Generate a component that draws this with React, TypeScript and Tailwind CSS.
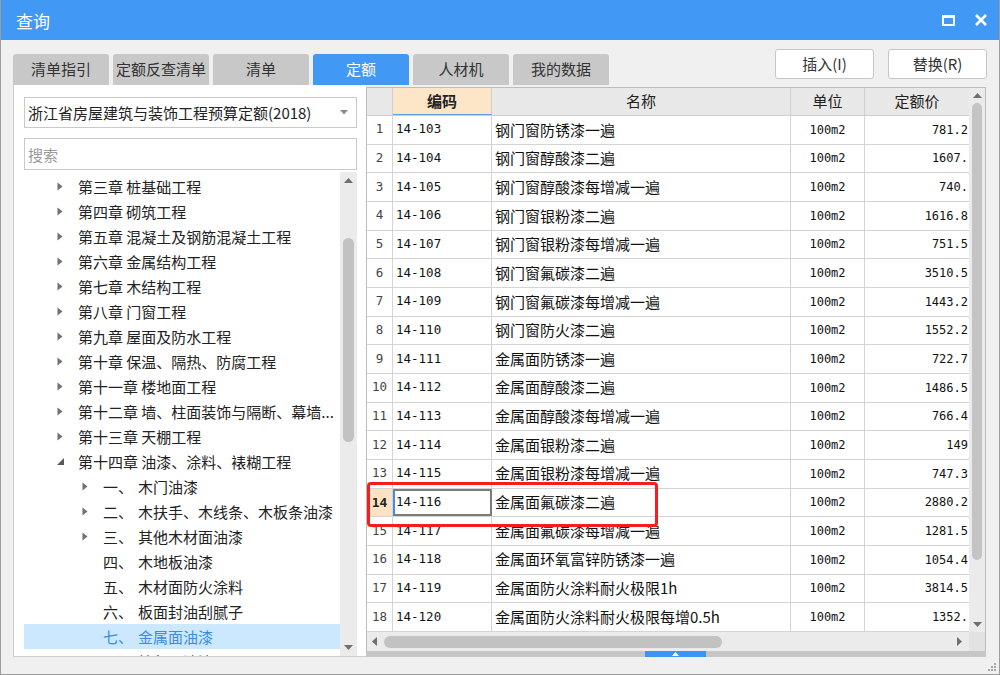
import React from "react";

const rows: [string, string, string][] = [
  ["14-103", "钢门窗防锈漆一遍", "781.2"],
  ["14-104", "钢门窗醇酸漆二遍", "1607."],
  ["14-105", "钢门窗醇酸漆每增减一遍", "740."],
  ["14-106", "钢门窗银粉漆二遍", "1616.8"],
  ["14-107", "钢门窗银粉漆每增减一遍", "751.5"],
  ["14-108", "钢门窗氟碳漆二遍", "3510.5"],
  ["14-109", "钢门窗氟碳漆每增减一遍", "1443.2"],
  ["14-110", "钢门窗防火漆二遍", "1552.2"],
  ["14-111", "金属面防锈漆一遍", "722.7"],
  ["14-112", "金属面醇酸漆二遍", "1486.5"],
  ["14-113", "金属面醇酸漆每增减一遍", "766.4"],
  ["14-114", "金属面银粉漆二遍", "149"],
  ["14-115", "金属面银粉漆每增减一遍", "747.3"],
  ["14-116", "金属面氟碳漆二遍", "2880.2"],
  ["14-117", "金属面氟碳漆每增减一遍", "1281.5"],
  ["14-118", "金属面环氧富锌防锈漆一遍", "1054.4"],
  ["14-119", "金属面防火涂料耐火极限1h", "3814.5"],
  ["14-120", "金属面防火涂料耐火极限每增0.5h", "1352."],
];

const chapters = [
  "第三章 桩基础工程",
  "第四章 砌筑工程",
  "第五章 混凝土及钢筋混凝土工程",
  "第六章 金属结构工程",
  "第七章 木结构工程",
  "第八章 门窗工程",
  "第九章 屋面及防水工程",
  "第十章 保温、隔热、防腐工程",
  "第十一章 楼地面工程",
  "第十二章 墙、柱面装饰与隔断、幕墙...",
  "第十三章 天棚工程",
];

const children: [string, string, boolean, boolean][] = [
  ["一、", "木门油漆", true, false],
  ["二、", "木扶手、木线条、木板条油漆", true, false],
  ["三、", "其他木材面油漆", true, false],
  ["四、", "木地板油漆", false, false],
  ["五、", "木材面防火涂料", false, false],
  ["六、", "板面封油刮腻子", false, false],
  ["七、", "金属面油漆", false, true],
  ["八、", "抹灰面油漆", false, false],
];

const tabs = ["清单指引", "定额反查清单", "清单", "定额", "人材机", "我的数据"];

function RightTri() {
  return (
    <svg width="6" height="9" viewBox="0 0 6 9">
      <path d="M0.5 0.5 L5.5 4.5 L0.5 8.5 Z" fill="#707070" />
    </svg>
  );
}

function Arrow({ dir }: { dir: "up" | "down" | "left" | "right" }) {
  const d =
    dir === "up"
      ? "M0 5 L4.5 0 L9 5 Z"
      : dir === "down"
      ? "M0 0 L9 0 L4.5 5 Z"
      : dir === "left"
      ? "M5 0 L5 9 L0 4.5 Z"
      : "M0 0 L0 9 L5 4.5 Z";
  const w = dir === "up" || dir === "down" ? 9 : 5;
  const h = dir === "up" || dir === "down" ? 5 : 9;
  return (
    <svg width={w} height={h} viewBox={`0 0 ${w} ${h}`}>
      <path d={d} fill="#6f6f6f" />
    </svg>
  );
}

export default function App() {
  return (
    <div className="relative w-[1000px] h-[675px] bg-[#f0f0f0] border-x border-b border-[#9c9c9c] flex flex-col overflow-hidden font-['Noto_Sans_CJK_SC',sans-serif] text-[#222]">
      {/* Title bar */}
      <div className="h-[40px] shrink-0 bg-[#4299f5] flex items-center justify-between pl-[15px] pr-[12px]">
        <span className="text-white text-[17px] leading-none">查询</span>
        <div className="flex items-center gap-[20px]">
          <svg width="13" height="11" viewBox="0 0 13 11">
            <rect x="1" y="1.5" width="11" height="8.5" fill="none" stroke="white" strokeWidth="2" />
            <rect x="0" y="0" width="13" height="3" fill="white" />
          </svg>
          <svg width="12" height="12" viewBox="0 0 12 12">
            <path d="M1 1 L11 11 M11 1 L1 11" stroke="white" strokeWidth="2.6" />
          </svg>
        </div>
      </div>

      {/* Tabs + buttons */}
      <div className="h-[45px] shrink-0 flex pl-[12px] pr-[12px]">
        <div className="flex items-end gap-[4px]">
          {tabs.map((t) => (
            <div
              key={t}
              className={
                t === "定额"
                  ? "w-[96px] h-[31px] rounded-t-[3px] bg-[#4299f5] text-white text-[15px] flex items-center justify-center"
                  : "w-[96px] h-[31px] rounded-t-[3px] bg-[#c8c8c8] text-[#333] text-[15px] flex items-center justify-center"
              }
            >
              {t}
            </div>
          ))}
        </div>
        <div className="ml-auto flex gap-[14px] pt-[9px]">
          <div className="w-[99px] h-[30px] bg-white border border-[#c6c6c6] rounded-[3px] flex items-center justify-center text-[15px] text-[#333]">
            插入(I)
          </div>
          <div className="w-[99px] h-[30px] bg-white border border-[#c6c6c6] rounded-[3px] flex items-center justify-center text-[15px] text-[#333]">
            替换(R)
          </div>
        </div>
      </div>

      {/* Main */}
      <div className="h-[572px] shrink-0 flex pl-[12px] pr-[13px]">
        {/* Left panel */}
        <div className="w-[353px] h-full bg-white border-l border-b border-[#cfcfcf] flex flex-col pl-[10px] pr-[9px]">
          <div className="mt-[12px] h-[31px] border border-[#c9c9c9] flex items-center pl-[3px] pr-[8px]">
            <span className="text-[15px] text-[#222] leading-none whitespace-nowrap">浙江省房屋建筑与装饰工程预算定额(2018)</span>
            <svg className="ml-auto" width="8" height="5" viewBox="0 0 8 5">
              <path d="M0 0 L8 0 L4 4.5 Z" fill="#8a8a8a" />
            </svg>
          </div>
          <div className="mt-[10px] h-[32px] border border-[#c9c9c9] flex items-center pl-[3px]">
            <span className="text-[15px] text-[#9a9a9a] leading-none">搜索</span>
          </div>
          <div className="mt-[2px] flex-1 flex min-h-0">
            <div className="w-[316px] overflow-hidden pt-[2px]">
              {chapters.map((c) => (
                <div key={c} className="h-[25px] flex items-center">
                  <div className="w-[33px] shrink-0" />
                  <div className="w-[21px] shrink-0 flex items-center">
                    <RightTri />
                  </div>
                  <span className="text-[15px] leading-none whitespace-nowrap text-[#222]">{c}</span>
                </div>
              ))}
              <div className="h-[25px] flex items-center">
                <div className="w-[33px] shrink-0" />
                <div className="w-[21px] shrink-0 flex items-center">
                  <svg width="7" height="7" viewBox="0 0 7 7">
                    <path d="M7 0 L7 7 L0 7 Z" fill="#5a5a5a" />
                  </svg>
                </div>
                <span className="text-[15px] leading-none whitespace-nowrap text-[#222]">第十四章 油漆、涂料、裱糊工程</span>
              </div>
              {children.map(([n, name, arrow, sel]) => (
                <div key={n} className={sel ? "h-[25px] flex items-center bg-[#cce8ff]" : "h-[25px] flex items-center"}>
                  <div className="w-[58px] shrink-0" />
                  <div className="w-[21px] shrink-0 flex items-center">{arrow ? <RightTri /> : null}</div>
                  <span className={sel ? "w-[35px] shrink-0 text-[15px] leading-none text-[#3a8ae6]" : "w-[35px] shrink-0 text-[15px] leading-none text-[#222]"}>{n}</span>
                  <span className={sel ? "text-[15px] leading-none whitespace-nowrap text-[#3a8ae6]" : "text-[15px] leading-none whitespace-nowrap text-[#222]"}>{name}</span>
                </div>
              ))}
            </div>
            <div className="w-[17px] bg-[#ebebeb] flex flex-col">
              <div className="h-[16px] flex items-center justify-center">
                <Arrow dir="up" />
              </div>
              <div className="mt-[50px] h-[204px] mx-[3px] rounded-full bg-[#c2c2c2]" />
              <div className="flex-1" />
              <div className="h-[18px] flex items-center justify-center">
                <Arrow dir="down" />
              </div>
            </div>
          </div>
        </div>

        {/* Right panel */}
        <div className="flex-1 flex flex-col pt-[2px]">
          <div className="flex-1 border-l border-t border-r border-[#bcbcbc] flex flex-col bg-white min-h-0">
            <div className="h-[544px] flex">
              <div className="w-[602px] overflow-hidden">
                {/* header */}
                <div className="h-[28px] flex border-b border-[#cfcfcf] bg-[#e8e8e8] text-[15px] text-[#222]">
                  <div className="w-[26px] shrink-0 border-r border-[#cfcfcf]" />
                  <div className="w-[99px] shrink-0 border-r border-[#cfcfcf] bg-[#fde6c8] border-b border-b-[#5a9de8] flex items-center justify-center font-bold">编码</div>
                  <div className="w-[299px] shrink-0 border-r border-[#cfcfcf] flex items-center justify-center">名称</div>
                  <div className="w-[74px] shrink-0 border-r border-[#cfcfcf] flex items-center justify-center">单位</div>
                  <div className="w-[104px] shrink-0 flex items-center justify-center">定额价</div>
                </div>
                {rows.map(([code, name, price], i) => {
                  const sel = i === 13;
                  return (
                    <div key={code} className="h-[28.67px] flex border-b border-[#d4d4d4] bg-white">
                      <div
                        className={
                          sel
                            ? "w-[26px] shrink-0 border-r border-[#d4d4d4] bg-[#fde3c3] flex items-center justify-center font-['DejaVu_Sans_Mono',monospace] text-[13px] font-bold text-[#222]"
                            : "w-[26px] shrink-0 border-r border-[#d4d4d4] flex items-center justify-center font-['DejaVu_Sans_Mono',monospace] text-[12.5px] text-[#444]"
                        }
                      >
                        {i + 1}
                      </div>
                      <div
                        className={
                          sel
                            ? "w-[99px] shrink-0 border-2 border-[#7b7b7b] border-l-[#3f8eec] flex items-center pl-[1px] font-['DejaVu_Sans_Mono',monospace] text-[12.5px] text-[#111]"
                            : "w-[99px] shrink-0 border-r border-[#d4d4d4] flex items-center pl-[3px] font-['DejaVu_Sans_Mono',monospace] text-[12.5px] text-[#111]"
                        }
                      >
                        {code}
                      </div>
                      <div className="w-[299px] shrink-0 border-r border-[#d4d4d4] flex items-center pl-[3px] text-[15px] text-[#111] whitespace-nowrap overflow-hidden">
                        {name}
                      </div>
                      <div className="w-[74px] shrink-0 border-r border-[#d4d4d4] flex items-center justify-center font-['DejaVu_Sans_Mono',monospace] text-[12px] text-[#111]">
                        100m2
                      </div>
                      <div className="w-[104px] shrink-0 flex items-center justify-end pr-[1px] font-['DejaVu_Sans_Mono',monospace] text-[12px] text-[#111]">
                        {price}
                      </div>
                    </div>
                  );
                })}
              </div>
              <div className="w-[16px] bg-[#ebebeb] flex flex-col">
                <div className="h-[15px] flex items-center justify-center">
                  <Arrow dir="up" />
                </div>
                <div className="h-[457px] mx-[3px] rounded-full bg-[#c4c4c4]" />
                <div className="flex-1" />
                <div className="h-[15px] flex items-center justify-center">
                  <Arrow dir="down" />
                </div>
              </div>
            </div>
            <div className="h-[19px] flex">
              <div className="w-[602px] bg-[#ebebeb] flex items-center">
                <div className="w-[15px] flex items-center justify-center">
                  <Arrow dir="left" />
                </div>
                <div className="ml-[2px] w-[338px] h-[12px] rounded-full bg-[#c2c2c2]" />
                <div className="flex-1" />
                <div className="w-[15px] mr-[2px] flex items-center justify-center">
                  <Arrow dir="right" />
                </div>
              </div>
              <div className="w-[16px] bg-[#e2e2e2]" />
            </div>
          </div>
          <div className="h-[6px] flex bg-[#c6c6c6]">
            <div className="w-[279px]" />
            <div className="w-[61px] bg-[#3d93f2] flex items-center justify-center">
              <svg width="7" height="4" viewBox="0 0 7 4">
                <path d="M0 4 L3.5 0 L7 4 Z" fill="white" />
              </svg>
            </div>
          </div>
        </div>
      </div>

      {/* Bottom */}
      <div className="flex-1 flex justify-end items-end pr-[3px] pb-[3px]">
        <svg width="9" height="9" viewBox="0 0 9 9">
          <rect x="7" y="1" width="2" height="2" fill="#a8a8a8" />
          <rect x="4" y="4" width="2" height="2" fill="#a8a8a8" />
          <rect x="7" y="4" width="2" height="2" fill="#a8a8a8" />
          <rect x="1" y="7" width="2" height="2" fill="#a8a8a8" />
          <rect x="4" y="7" width="2" height="2" fill="#a8a8a8" />
          <rect x="7" y="7" width="2" height="2" fill="#a8a8a8" />
        </svg>
      </div>

      {/* Red highlight box */}
      <div className="absolute left-[366px] top-[482px] w-[291px] h-[45px] border-[3px] border-[#f51d1d] rounded-[4px] pointer-events-none" />
    </div>
  );
}
